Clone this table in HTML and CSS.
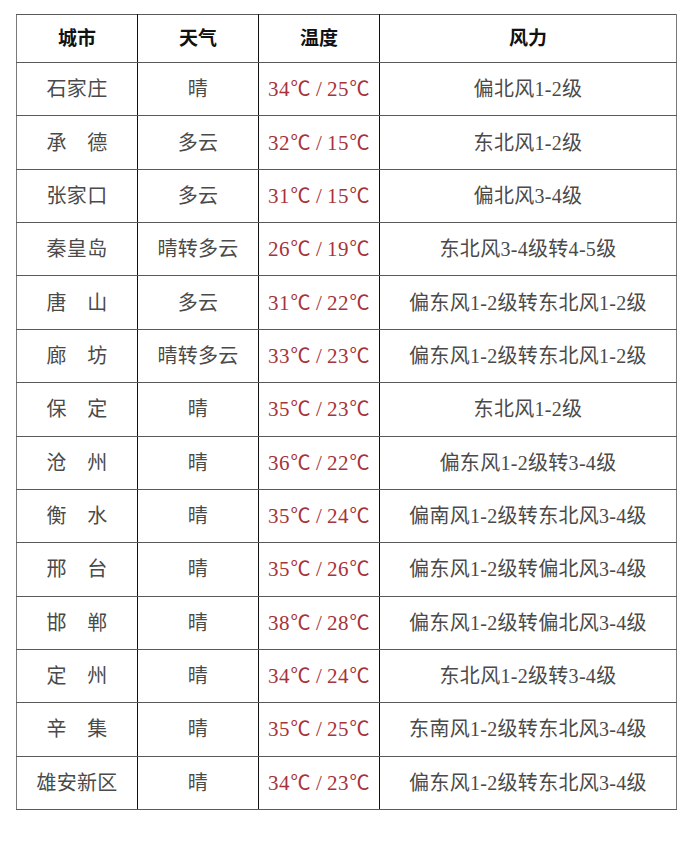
FILE: index.html
```html
<!DOCTYPE html>
<html lang="zh-CN">
<head>
<meta charset="utf-8">
<title>天气预报</title>
<link rel="stylesheet" href="styles.css">
</head>
<body>
<div class="page">
<table class="weather">
<colgroup>
<col class="c-city"><col class="c-sky"><col class="c-temp"><col class="c-wind">
</colgroup>
<thead>
<tr><th>城市</th><th>天气</th><th>温度</th><th>风力</th></tr>
</thead>
<tbody>
<tr><td>石家庄</td><td>晴</td><td class="temp">34<span class="deg">℃</span><span class="sl">/</span>25<span class="deg">℃</span></td><td>偏北风1-2级</td></tr>
<tr><td>承　德</td><td>多云</td><td class="temp">32<span class="deg">℃</span><span class="sl">/</span>15<span class="deg">℃</span></td><td>东北风1-2级</td></tr>
<tr><td>张家口</td><td>多云</td><td class="temp">31<span class="deg">℃</span><span class="sl">/</span>15<span class="deg">℃</span></td><td>偏北风3-4级</td></tr>
<tr><td>秦皇岛</td><td>晴转多云</td><td class="temp">26<span class="deg">℃</span><span class="sl">/</span>19<span class="deg">℃</span></td><td>东北风3-4级转4-5级</td></tr>
<tr><td>唐　山</td><td>多云</td><td class="temp">31<span class="deg">℃</span><span class="sl">/</span>22<span class="deg">℃</span></td><td>偏东风1-2级转东北风1-2级</td></tr>
<tr><td>廊　坊</td><td>晴转多云</td><td class="temp">33<span class="deg">℃</span><span class="sl">/</span>23<span class="deg">℃</span></td><td>偏东风1-2级转东北风1-2级</td></tr>
<tr><td>保　定</td><td>晴</td><td class="temp">35<span class="deg">℃</span><span class="sl">/</span>23<span class="deg">℃</span></td><td>东北风1-2级</td></tr>
<tr><td>沧　州</td><td>晴</td><td class="temp">36<span class="deg">℃</span><span class="sl">/</span>22<span class="deg">℃</span></td><td>偏东风1-2级转3-4级</td></tr>
<tr><td>衡　水</td><td>晴</td><td class="temp">35<span class="deg">℃</span><span class="sl">/</span>24<span class="deg">℃</span></td><td>偏南风1-2级转东北风3-4级</td></tr>
<tr><td>邢　台</td><td>晴</td><td class="temp">35<span class="deg">℃</span><span class="sl">/</span>26<span class="deg">℃</span></td><td>偏东风1-2级转偏北风3-4级</td></tr>
<tr><td>邯　郸</td><td>晴</td><td class="temp">38<span class="deg">℃</span><span class="sl">/</span>28<span class="deg">℃</span></td><td>偏东风1-2级转偏北风3-4级</td></tr>
<tr><td>定　州</td><td>晴</td><td class="temp">34<span class="deg">℃</span><span class="sl">/</span>24<span class="deg">℃</span></td><td>东北风1-2级转3-4级</td></tr>
<tr><td>辛　集</td><td>晴</td><td class="temp">35<span class="deg">℃</span><span class="sl">/</span>25<span class="deg">℃</span></td><td>东南风1-2级转东北风3-4级</td></tr>
<tr><td>雄安新区</td><td>晴</td><td class="temp">34<span class="deg">℃</span><span class="sl">/</span>23<span class="deg">℃</span></td><td>偏东风1-2级转东北风3-4级</td></tr>
</tbody>
</table>
</div>
</body>
</html>
```

FILE: styles.css
```css
html, body {
  margin: 0;
  padding: 0;
  background: #ffffff;
}

.page {
  padding: 14px 0 0 16px;
}

.weather {
  border-collapse: collapse;
  table-layout: fixed;
  width: 660px;
  font-family: "Liberation Serif", "Noto Sans CJK SC", serif;
  font-size: 20px;
  color: #4a4a4a;
  border: 1px solid #7a7a7a;
}

.c-city, .c-sky, .c-temp { width: 121px; }
.c-wind { width: 297px; }

.weather th,
.weather td {
  text-align: center;
  vertical-align: middle;
  padding: 0;
  border-top: 1px solid #5a5a5a;
  border-bottom: 1px solid #5a5a5a;
  border-left: 1px solid #111111;
  border-right: 1px solid #111111;
  line-height: 1;
}

.weather th:first-child,
.weather td:first-child { border-left-color: #7a7a7a; }
.weather th:last-child,
.weather td:last-child { border-right-color: #7a7a7a; }

.weather thead tr { height: 48px; }
.weather tbody tr { height: 53.36px; }

.weather th {
  font-weight: bold;
  color: #111111;
  font-size: 19px;
}

.weather td {
  letter-spacing: 0.3px;
}

.weather .temp {
  color: #a8323a;
  font-size: 21px;
  white-space: nowrap;
  letter-spacing: 0.5px;
}

.weather .deg {
  display: inline-block;
  width: 21px;
  text-align: center;
  font-family: "Noto Sans CJK SC", sans-serif;
  font-size: 20px;
  letter-spacing: 0;
}

.weather .sl {
  display: inline-block;
  padding: 0 5px;
  letter-spacing: 0;
}
```
